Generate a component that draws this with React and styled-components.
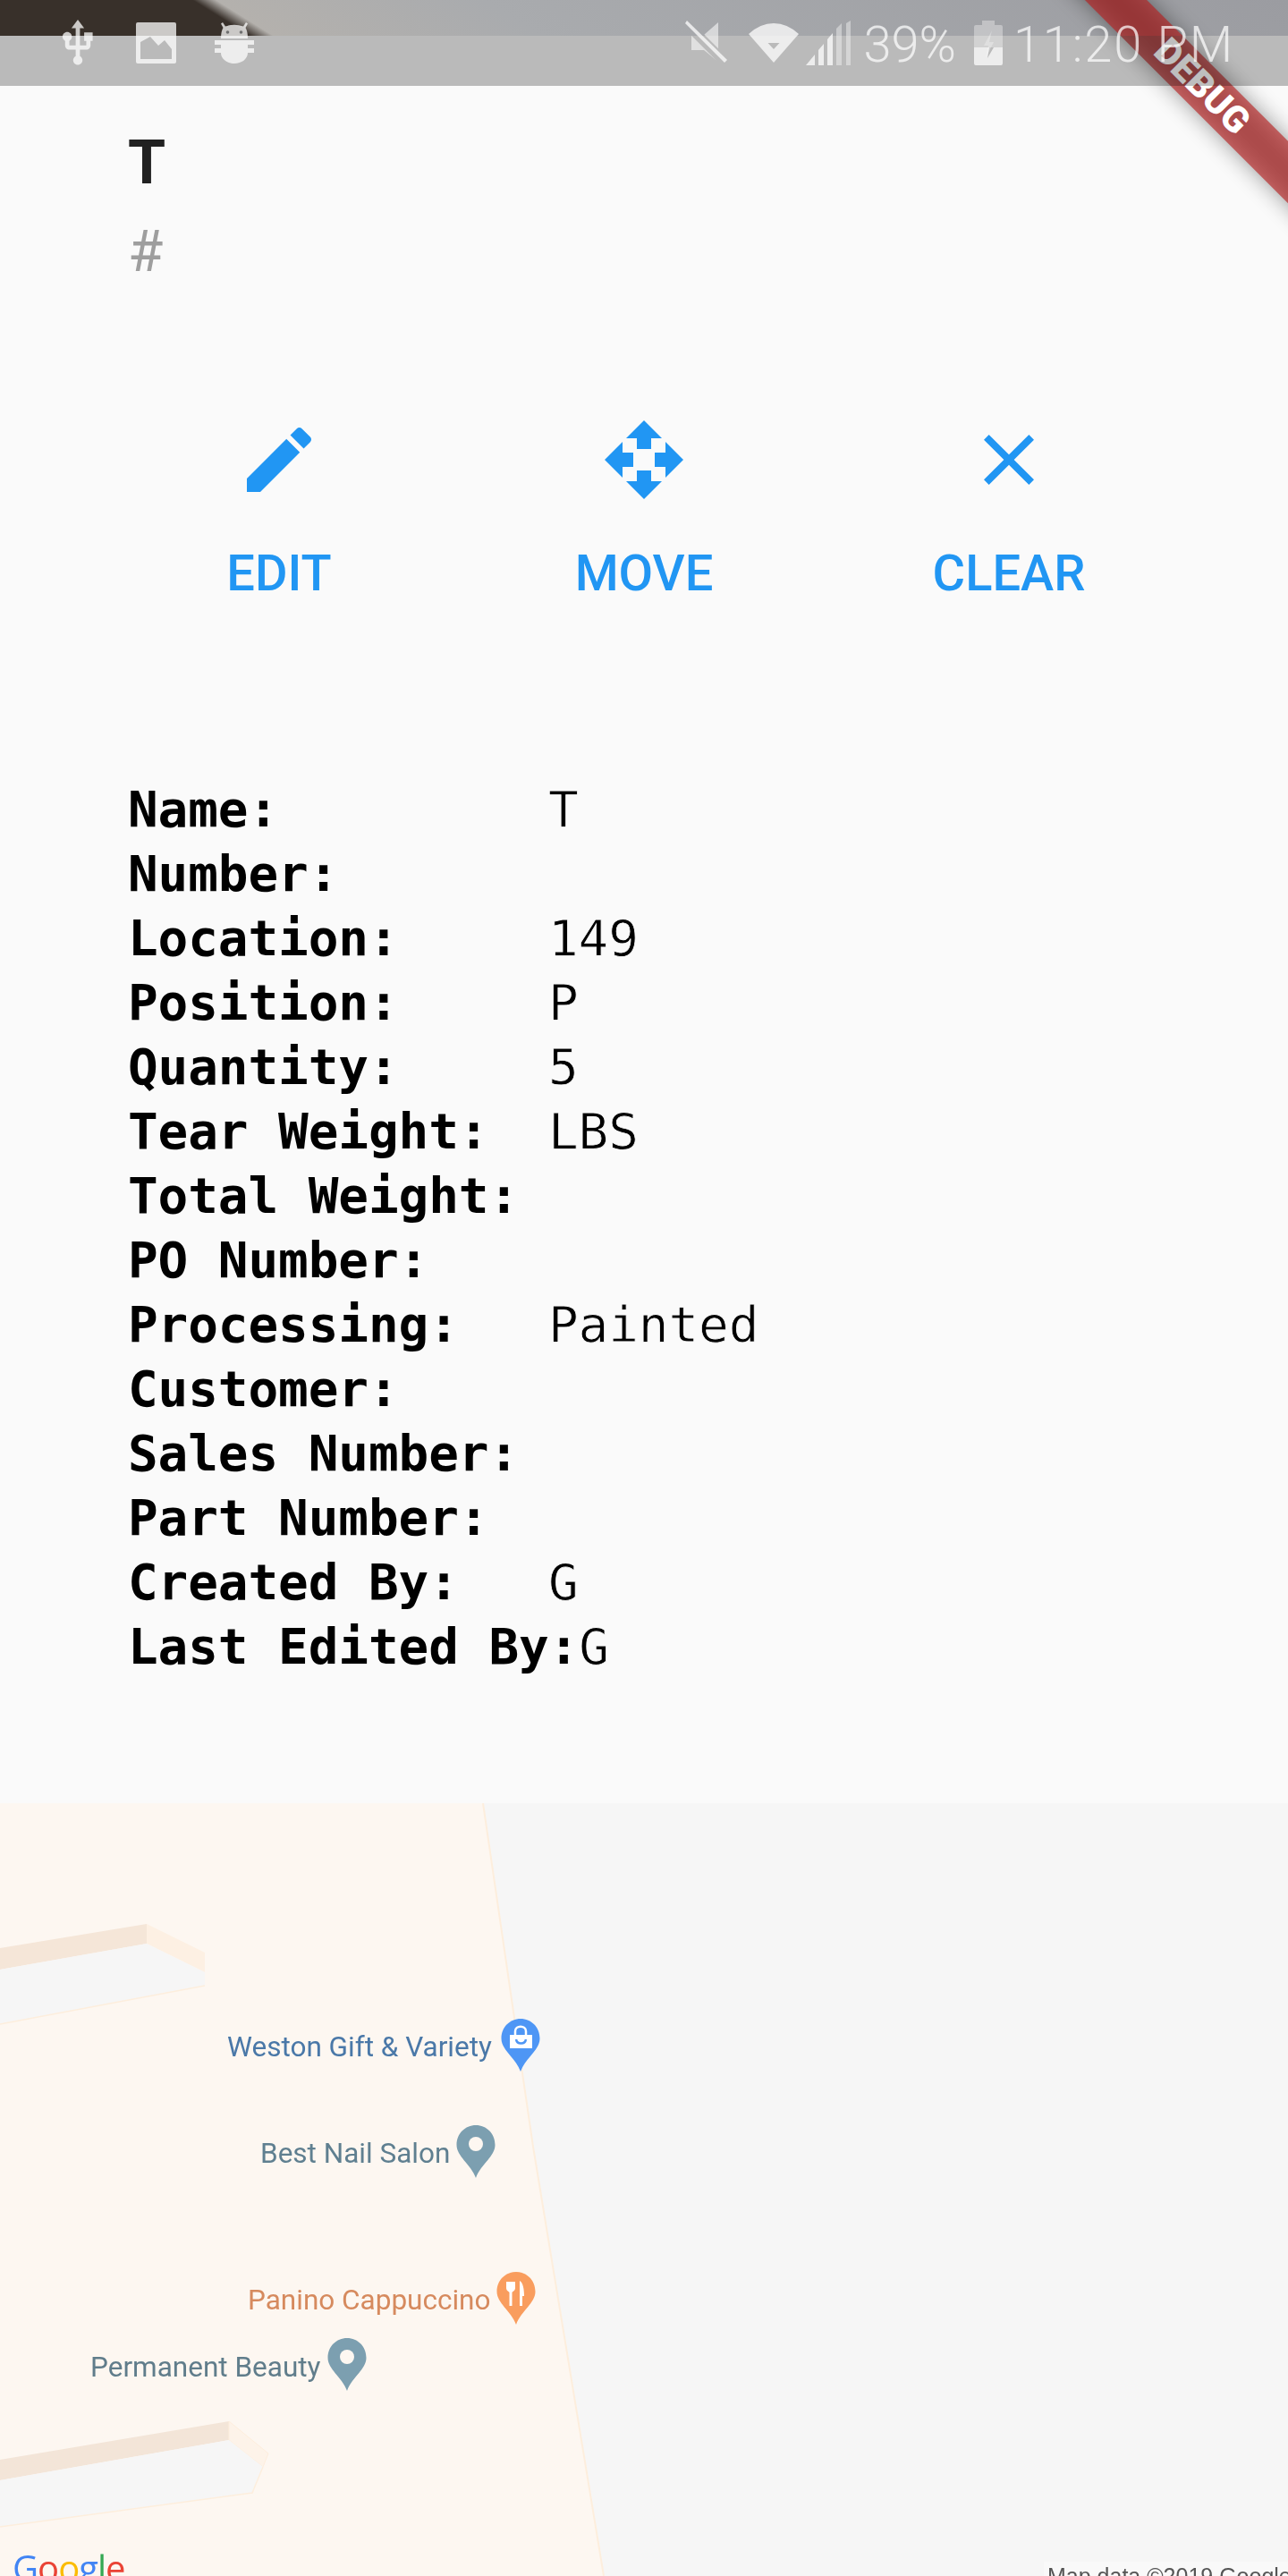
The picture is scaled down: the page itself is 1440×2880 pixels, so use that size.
import React from "react";
import styled, { createGlobalStyle } from "styled-components";

const Global = createGlobalStyle`
  html, body { margin: 0; padding: 0; background: #fafafa; }
  #root { width: 1440px; height: 2880px; overflow: hidden; position: relative; }
`;

const Page = styled.div`
  width: 1440px;
  height: 2880px;
  display: flex;
  flex-direction: column;
  background: #fafafa;
  font-family: Roboto, "Liberation Sans", sans-serif;
`;

const StatusBar = styled.header`
  flex: none;
  height: 96px;
  box-sizing: border-box;
  padding: 0 60px 0 69px;
  display: flex;
  align-items: flex-start;
  background: linear-gradient(32deg, #38302a 148px, #b4b1ad 162px, #a9abae 320px, #9b9ca1 100%) 0 0 / 100% 40px no-repeat;
  &::after {
    content: "";
    position: absolute;
    left: 0;
    top: 40px;
    width: 100%;
    height: 56px;
    background: rgba(0, 0, 0, 0.255);
    z-index: 2;
  }
`;

const StatusGroup = styled.div`
  position: relative;
  z-index: 3;
  display: flex;
  align-items: flex-start;
  margin-left: ${(p) => (p.$end ? "auto" : "0")};
`;

const StatusIcon = styled.svg`
  display: block;
  flex: none;
  margin-top: ${(p) => p.$top}px;
  margin-left: ${(p) => p.$gap || 0}px;
  fill: #fff;
  fill-opacity: 0.74;
`;

const StatusText = styled.span`
  display: block;
  margin-top: 17px;
  margin-left: ${(p) => p.$gap}px;
  font-size: 56px;
  line-height: 66px;
  font-weight: 300;
  letter-spacing: ${(p) => p.$track || 0}px;
  color: rgba(255, 255, 255, 0.72);
  white-space: nowrap;
`;

const BannerClip = styled.div`
  position: absolute;
  top: 0;
  right: 0;
  width: 300px;
  height: 300px;
  overflow: hidden;
  pointer-events: none;
  z-index: 1;
`;

const Ribbon = styled.div`
  position: absolute;
  left: 4px;
  top: 72px;
  width: 400px;
  height: 49px;
  transform: rotate(45deg);
  display: flex;
  align-items: center;
  justify-content: center;
  &::before {
    content: "";
    position: absolute;
    inset: 0;
    background: rgba(0, 0, 0, 0.4);
    filter: blur(12px);
  }
  &::after {
    content: "";
    position: absolute;
    inset: 0;
    background: rgba(183, 28, 28, 0.627);
  }
`;

const RibbonText = styled.span`
  position: relative;
  z-index: 1;
  font-size: 41px;
  line-height: 41px;
  font-weight: 900;
  color: #fff;
`;

const Heading = styled.section`
  flex: none;
  padding: 46px 0 0 143px;
`;

const Title = styled.div`
  font-size: 68px;
  line-height: 80px;
  font-weight: 700;
  color: rgba(0, 0, 0, 0.87);
`;

const Subtitle = styled.div`
  margin-top: 22px;
  font-size: 64px;
  line-height: 75px;
  font-weight: 400;
  color: #9e9e9e;
`;

const Actions = styled.nav`
  flex: none;
  margin-top: 147px;
  display: grid;
  grid-template-columns: repeat(3, 408px);
  justify-content: center;
`;

const ActionButton = styled.button`
  appearance: none;
  border: 0;
  background: none;
  padding: 0;
  display: flex;
  flex-direction: column;
  align-items: center;
  color: #2196f3;
  font-family: inherit;
`;

const ActionIcon = styled.svg`
  display: block;
  width: 96px;
  height: 96px;
  fill: currentColor;
`;

const ActionLabel = styled.span`
  margin-top: 46px;
  font-size: 56px;
  line-height: 66px;
  font-weight: 500;
`;

const InfoList = styled.dl`
  flex: none;
  margin: 195px 0 0;
  padding: 0 0 0 143px;
  font-family: "DejaVu Sans Mono", "Liberation Mono", monospace;
  font-size: 56px;
  line-height: 72px;
  letter-spacing: -0.1px;
  color: #000;
`;

const InfoRow = styled.div`
  display: flex;
  align-items: baseline;
  height: 72px;
  white-space: pre;
`;

const InfoKey = styled.dt`
  min-width: 470px;
  font-weight: 700;
`;

const InfoValue = styled.dd`
  margin: 0;
  font-weight: 400;
  -webkit-text-stroke: 0.8px #fafafa;
`;

const MapPanel = styled.section`
  position: absolute;
  left: 0;
  top: 2016px;
  width: 1440px;
  height: 864px;
  overflow: hidden;
  background: #f6f6f6;
`;

const MapArt = styled.svg`
  position: absolute;
  inset: 0;
  display: block;
`;

const MapLabel = styled.span`
  position: absolute;
  left: ${(p) => p.$x}px;
  top: ${(p) => p.$y}px;
  font-size: 31.5px;
  line-height: 36px;
  color: ${(p) => p.$color};
  white-space: nowrap;
  filter: blur(0.6px);
`;

const MapPin = styled.svg`
  position: absolute;
  left: ${(p) => p.$x - 22}px;
  top: ${(p) => p.$y}px;
  display: block;
  filter: blur(0.4px);
`;

const GoogleMark = styled.span`
  position: absolute;
  left: 14px;
  top: 831px;
  font-family: "Open Sans", Roboto, sans-serif;
  font-size: 40px;
  line-height: 48px;
  font-weight: 500;
  letter-spacing: -1px;
  filter: blur(0.5px);
`;

const GoogleLetter = styled.span`
  color: ${(p) => p.$color};
`;

const Attribution = styled.span`
  position: absolute;
  right: 0;
  top: 848px;
  width: 273px;
  height: 30px;
  box-sizing: border-box;
  padding: 1px 0 0 4px;
  background: #f9f9f9;
  font-family: "Liberation Sans", Arial, sans-serif;
  font-size: 25px;
  line-height: 30px;
  color: #555;
  white-space: nowrap;
  filter: blur(0.5px);
`;

const rows = [
  ["Name:", "T"],
  ["Number:", ""],
  ["Location:", "149"],
  ["Position:", "P"],
  ["Quantity:", "5"],
  ["Tear Weight:", "LBS"],
  ["Total Weight:", ""],
  ["PO Number:", ""],
  ["Processing:", "Painted"],
  ["Customer:", ""],
  ["Sales Number:", ""],
  ["Part Number:", ""],
  ["Created By:", "G"],
  ["Last Edited By:", "G"],
];

const PIN = "M22 0C34 0 43.5 9.5 43.5 22C43.5 35 28 43 22 59C16 43 .5 35 .5 22C.5 9.5 10 0 22 0Z";

function Pin({ x, y, color, children }) {
  return (
    <MapPin $x={x} $y={y} width="44" height="60" viewBox="0 0 44 60">
      <path d={PIN} fill={color} />
      {children}
    </MapPin>
  );
}

export default function App() {
  return (
    <Page>
      <Global />
      <StatusBar>
        <StatusGroup>
          <StatusIcon $top={21} width="36" height="54" viewBox="4.4 0.6 15.2 22.6" preserveAspectRatio="none">
            <path d="M15 7v4h1v2h-3V5h2l-3-4-3 4h2v8H8v-2.07c.7-.37 1.2-1.08 1.2-1.93 0-1.21-.99-2.2-2.2-2.2-1.21 0-2.2.99-2.2 2.2 0 .85.5 1.56 1.2 1.93V13c0 1.11.89 2 2 2h3v3.05c-.71.37-1.2 1.1-1.2 1.95 0 1.22.99 2.2 2.2 2.2 1.21 0 2.2-.98 2.2-2.2 0-.85-.49-1.58-1.2-1.95V15h3c1.11 0 2-.89 2-2v-2h1V7h-4z" />
          </StatusIcon>
          <StatusIcon $top={25} $gap={47} width="45" height="46" viewBox="0 0 45 46">
            <path fillRule="evenodd" d="M2 0H43A2 2 0 0 1 45 2V44A2 2 0 0 1 43 46H2A2 2 0 0 1 0 44V2A2 2 0 0 1 2 0ZM5 22V41H40V30L32 20L25 26L16 16Z" />
          </StatusIcon>
          <StatusIcon $top={25} $gap={43} width="44" height="46" viewBox="0 0 44 46">
            <path d="M9 0L12 4.500Q22 1 32 4.500L35 0L37 1.500L34.500 6Q37 10 37 18H7Q7 10 9.500 6L7 1.500Z" />
            <path d="M0 20H44V25H0ZM7 25H37V29H7ZM0 29H44V34H0ZM7 34H37C37 41 30 46 22 46C14 46 7 41 7 34Z" />
            <circle cx="14.500" cy="11" r="1.800" fill="#6f6f6f" fillOpacity="1" />
            <circle cx="29.500" cy="11" r="1.800" fill="#6f6f6f" fillOpacity="1" />
          </StatusIcon>
        </StatusGroup>
        <StatusGroup $end>
          <StatusIcon $top={23} width="47" height="47" viewBox="0 0 47 47">
            <defs>
              <mask id="muteGap">
                <rect width="47" height="47" fill="#fff" />
                <path d="M0 2L44 46" stroke="#000" strokeWidth="11" />
              </mask>
            </defs>
            <path mask="url(#muteGap)" d="M37 2V46L21 33H7V16H21Z" />
            <path d="M2 0L47 44L44 47L0 3Z" />
          </StatusIcon>
          <StatusIcon $top={26} $gap={24} width="56" height="44" viewBox="0 0 56 44">
            <path fillRule="evenodd" d="M28 44L0 12Q13 0 28 0T56 12ZM21.500 22L34.500 22L28 29Z" />
          </StatusIcon>
          <StatusIcon $top={23} $gap={8} width="50" height="50" viewBox="0 0 50 50">
            <path d="M0 50L10 38V50ZM14 33L20 26V50H14ZM24 21L30 14V50H24Z" />
            <path d="M34 9L40 3V50H34Z" fillOpacity="0.4" />
            <path d="M45 3L50 0V50H45Z" fillOpacity="0.4" />
          </StatusIcon>
          <StatusText $gap={14}>39%</StatusText>
          <StatusIcon $top={23} $gap={20} width="32" height="50" viewBox="0 0 32 50">
            <path d="M9 0H23V5H30A2 2 0 0 1 32 7V30H0V7A2 2 0 0 1 2 5H9Z" fillOpacity="0.35" />
            <path fillRule="evenodd" d="M0 30H32V48A2 2 0 0 1 30 50H2A2 2 0 0 1 0 48ZM14 30L12 30H17L15 42L22 30Z" />
            <path d="M20 11L11 28H16L13 42L22 24H17Z" fillOpacity="0.3" />
          </StatusIcon>
          <StatusText $gap={12} $track={1.8}>11:20 PM</StatusText>
        </StatusGroup>
      </StatusBar>

      <Heading>
        <Title>T</Title>
        <Subtitle>#</Subtitle>
      </Heading>

      <Actions>
        <ActionButton>
          <ActionIcon viewBox="0 0 24 24">
            <path d="M3 17.25V21h3.75L17.81 9.94l-3.75-3.75L3 17.25zM20.71 7.04c.39-.39.39-1.02 0-1.41l-2.34-2.34c-.39-.39-1.02-.39-1.41 0l-1.83 1.83 3.75 3.75 1.83-1.83z" />
          </ActionIcon>
          <ActionLabel>EDIT</ActionLabel>
        </ActionButton>
        <ActionButton>
          <ActionIcon viewBox="0 0 24 24">
            <path d="M10 9h4V6h3l-5-5-5 5h3v3zm-1 1H6V7l-5 5 5 5v-3h3v-4zm14 2l-5-5v3h-3v4h3v3l5-5zm-9 3h-4v3H7l5 5 5-5h-3v-3z" />
          </ActionIcon>
          <ActionLabel>MOVE</ActionLabel>
        </ActionButton>
        <ActionButton>
          <ActionIcon viewBox="0 0 24 24">
            <path d="M19 6.41L17.59 5 12 10.59 6.41 5 5 6.41 10.59 12 5 17.59 6.41 19 12 13.41 17.59 19 19 17.59 13.41 12z" />
          </ActionIcon>
          <ActionLabel>CLEAR</ActionLabel>
        </ActionButton>
      </Actions>

      <InfoList>
        {rows.map(([k, v]) => (
          <InfoRow key={k}>
            <InfoKey>{k}</InfoKey>
            <InfoValue>{v}</InfoValue>
          </InfoRow>
        ))}
      </InfoList>

      <MapPanel>
        <MapArt width="1440" height="864" viewBox="0 2016 1440 864">
          <path d="M0 2016H540L596 2400L675 2880H0Z" fill="#fdf7f1" />
          <path d="M540 2016L596 2400L675 2880" fill="none" stroke="#fdeedd" strokeWidth="2" />
          <path d="M0 2178L164 2151V2173L0 2202Z" fill="#f5e6d8" />
          <path d="M164 2151L229 2183V2220L229 2205L164 2173Z" fill="#fdf0e3" />
          <path d="M0 2202L164 2173L229 2205V2220L0 2263Z" fill="#f6f6f6" />
          <path d="M229 2220L0 2263" stroke="#fdeedd" strokeWidth="1.5" fill="none" />
          <path d="M0 2750L256 2707V2728L0 2773Z" fill="#f3e5d8" />
          <path d="M256 2707L300 2743L294 2758L256 2728Z" fill="#fdf3e9" stroke="#fdeedd" />
          <path d="M0 2773L256 2728L294 2758L282 2787L0 2825Z" fill="#f6f6f6" />
          <path d="M294 2758L282 2787L0 2825" stroke="#fdeedd" strokeWidth="1.5" fill="none" />
        </MapArt>

        <MapLabel $x={254} $y={255} $color="#4a78a8">Weston Gift &amp; Variety</MapLabel>
        <Pin x={582} y={241} color="#4e96f5">
          <path d="M10 18H35V33H10Z" fill="#fff" />
          <path d="M16 18V14C16 7 28 7 28 14V18" fill="none" stroke="#fff" strokeWidth="2.500" />
          <path d="M17 23C18 29 27 29 28 23" fill="none" stroke="#4e96f5" strokeWidth="2.500" />
        </Pin>

        <MapLabel $x={291} $y={374} $color="#5f7f90">Best Nail Salon</MapLabel>
        <Pin x={532} y={360} color="#7c9fb0">
          <circle cx="22" cy="21" r="8" fill="#fdf7f1" />
        </Pin>

        <MapLabel $x={277} $y={538} $color="#d68a5e">Panino Cappuccino</MapLabel>
        <Pin x={577} y={524} color="#f99d5e">
          <path d="M11 11H21V18C21 21 18 22 17.500 23V38H14.500V23C14 22 11 21 11 18Z" fill="#fff" />
          <path d="M26 10C30 12 31 20 31 27H29V38H26Z" fill="#fff" />
        </Pin>

        <MapLabel $x={101} $y={613} $color="#607d8b">Permanent Beauty</MapLabel>
        <Pin x={388} y={598} color="#7c9fb0">
          <circle cx="22" cy="21" r="8" fill="#fdf7f1" />
        </Pin>

        <GoogleMark>
          <GoogleLetter $color="#4285f4">G</GoogleLetter>
          <GoogleLetter $color="#ea4335">o</GoogleLetter>
          <GoogleLetter $color="#fbbc05">o</GoogleLetter>
          <GoogleLetter $color="#4285f4">g</GoogleLetter>
          <GoogleLetter $color="#34a853">l</GoogleLetter>
          <GoogleLetter $color="#ea4335">e</GoogleLetter>
        </GoogleMark>
        <Attribution>Map data ©2019 Google</Attribution>
      </MapPanel>

      <BannerClip>
        <Ribbon>
          <RibbonText>DEBUG</RibbonText>
        </Ribbon>
      </BannerClip>
    </Page>
  );
}
